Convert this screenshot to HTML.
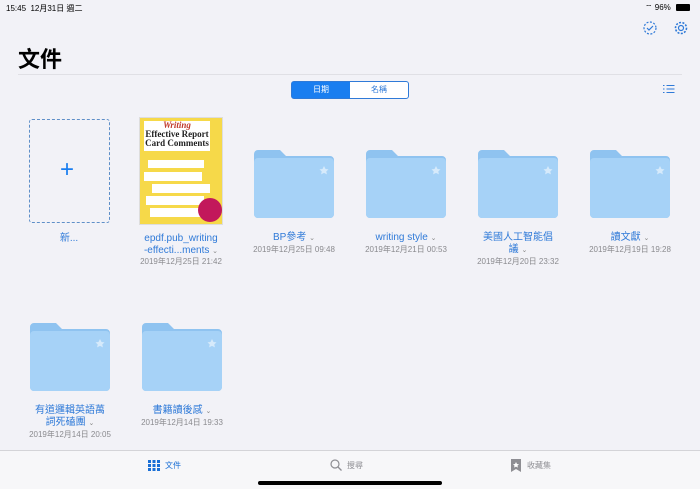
<!DOCTYPE html><html><head><meta charset="utf-8"><style>
*{margin:0;padding:0;box-sizing:border-box}
body{width:700px;height:489px;background:#f2f2f7;font-family:"Liberation Sans","Noto Sans CJK TC",sans-serif;position:relative;overflow:hidden;color:#000}
.a{position:absolute}
.fold{position:absolute;width:80px;height:68px}
.name{position:absolute;width:112px;text-align:center;font-size:10px;color:#2f7ad8;line-height:12px}
.date{position:absolute;width:112px;text-align:center;font-size:8px;color:#8a8a8e}
.tab{position:absolute;top:460px;font-size:8px;color:#8e8e93}
</style></head><body>
<div class="a" style="left:6px;top:3px;font-size:8px">15:45&nbsp; 12月31日 週二</div>
<div class="a" style="left:645px;top:3px;font-size:8px">⌔ 96%</div>
<div class="a" style="left:676px;top:4px;width:14px;height:7px;background:#000;border-radius:1px"></div>
<svg class="a" style="left:642px;top:20px" width="16" height="16"><circle cx="8" cy="8" r="6" fill="none" stroke="#2f7ad8" stroke-width="1.2" stroke-dasharray="2 1.5"/><path d="M5 8l2 2 4-4" stroke="#2f7ad8" fill="none" stroke-width="1.2"/></svg>
<svg class="a" style="left:673px;top:20px" width="16" height="16"><circle cx="8" cy="8" r="5.5" fill="none" stroke="#2f7ad8" stroke-width="1.6" stroke-dasharray="2 1.4"/><circle cx="8" cy="8" r="2.5" fill="none" stroke="#2f7ad8" stroke-width="1.2"/></svg>
<div class="a" style="left:18px;top:42px;font-size:22px;font-weight:bold">文件</div>
<div class="a" style="left:18px;top:74px;width:664px;height:1px;background:#e0e0e5"></div>
<div class="a" style="left:291px;top:81px;width:118px;height:18px;border:1px solid #2f7ad8;border-radius:3px;background:#fff;font-size:8px">
<div class="a" style="left:0;top:0;width:58px;height:16px;background:#1a7ef0;color:#fff;text-align:center;line-height:16px">日期</div>
<div class="a" style="left:58px;top:0;width:58px;height:16px;color:#2f7ad8;text-align:center;line-height:16px">名稱</div></div>
<svg class="a" style="left:663px;top:84px" width="12" height="10"><g stroke="#2f7ad8" stroke-width="1"><path d="M0 1.5h1.5M0 5h1.5M0 8.5h1.5M3.5 1.5h8M3.5 5h8M3.5 8.5h8"/></g></svg>
<div class="a" style="left:29px;top:119px;width:81px;height:104px;border:1px dashed #5f8fc8;border-radius:3px"></div>
<div class="a" style="left:60px;top:156px;font-size:24px;color:#1a7ef0;line-height:28px">+</div>
<div class="name" style="left:13px;top:233px">新...</div>
<div class="a" style="left:139px;top:117px;width:84px;height:108px;background:#f6d949;border:1px solid #ddd">
<div class="a" style="left:4px;top:3px;width:66px;height:30px;background:#fff;font:bold 9px 'Liberation Serif';color:#222;text-align:center;line-height:9px"><span style="color:#c0392b;font-style:italic">Writing</span><br>Effective Report<br>Card Comments</div>
<div class="a" style="left:8px;top:42px;width:56px;height:8px;background:#fff"></div>
<div class="a" style="left:4px;top:54px;width:58px;height:9px;background:#fff"></div>
<div class="a" style="left:12px;top:66px;width:58px;height:9px;background:#fff"></div>
<div class="a" style="left:6px;top:78px;width:58px;height:9px;background:#fff"></div>
<div class="a" style="left:10px;top:90px;width:54px;height:9px;background:#fff"></div>
<div class="a" style="left:58px;top:80px;width:24px;height:24px;border-radius:50%;background:#c2185b"></div></div>
<div class="name" style="left:125px;top:233px">epdf.pub_writing<br>-effecti...ments <span style="font-size:7px;color:#888">⌄</span></div>
<div class="date" style="left:125px;top:256px">2019年12月25日 21:42</div>
<svg width="0" height="0" style="position:absolute"><defs><g id="f"><path d="M4 0h22l6 6h44a4 4 0 0 1 4 4v54a4 4 0 0 1-4 4H4a4 4 0 0 1-4-4V4a4 4 0 0 1 4-4z" fill="#8fc3f0"/><path d="M0 12a4 4 0 0 1 4-4h72a4 4 0 0 1 4 4v52a4 4 0 0 1-4 4H4a4 4 0 0 1-4-4z" fill="#a6d2f7"/><path d="M70 16l1.5 3 3 .4-2.2 2 .6 3-2.9-1.5-2.9 1.5.6-3-2.2-2 3-.4z" fill="#d6eafb"/></g></defs></svg>
<svg class="fold" style="left:254px;top:150px"><use href="#f"/></svg>
<svg class="fold" style="left:366px;top:150px"><use href="#f"/></svg>
<svg class="fold" style="left:478px;top:150px"><use href="#f"/></svg>
<svg class="fold" style="left:590px;top:150px"><use href="#f"/></svg>
<svg class="fold" style="left:30px;top:323px"><use href="#f"/></svg>
<svg class="fold" style="left:142px;top:323px"><use href="#f"/></svg>
<div class="name" style="left:238px;top:232px">BP參考 <span style="font-size:7px;color:#888">⌄</span></div>
<div class="date" style="left:238px;top:244px">2019年12月25日 09:48</div>
<div class="name" style="left:350px;top:232px">writing style <span style="font-size:7px;color:#888">⌄</span></div>
<div class="date" style="left:350px;top:244px">2019年12月21日 00:53</div>
<div class="name" style="left:462px;top:232px">美國人工智能倡<br>議 <span style="font-size:7px;color:#888">⌄</span></div>
<div class="date" style="left:462px;top:256px">2019年12月20日 23:32</div>
<div class="name" style="left:574px;top:232px">讀文獻 <span style="font-size:7px;color:#888">⌄</span></div>
<div class="date" style="left:574px;top:244px">2019年12月19日 19:28</div>
<div class="name" style="left:14px;top:405px">有道邏輯英語萬<br>詞死磕團 <span style="font-size:7px;color:#888">⌄</span></div>
<div class="date" style="left:14px;top:429px">2019年12月14日 20:05</div>
<div class="name" style="left:126px;top:405px">書籍讀後感 <span style="font-size:7px;color:#888">⌄</span></div>
<div class="date" style="left:126px;top:417px">2019年12月14日 19:33</div>
<div class="a" style="left:0;top:450px;width:700px;height:39px;background:#f7f7f9;border-top:1px solid #d4d4d8"></div>
<svg class="a" style="left:148px;top:460px" width="12" height="11"><g fill="#1a6fd6"><rect x="0" y="0" width="3" height="3"/><rect x="4.5" y="0" width="3" height="3"/><rect x="9" y="0" width="3" height="3"/><rect x="0" y="4" width="3" height="3"/><rect x="4.5" y="4" width="3" height="3"/><rect x="9" y="4" width="3" height="3"/><rect x="0" y="8" width="3" height="3"/><rect x="4.5" y="8" width="3" height="3"/><rect x="9" y="8" width="3" height="3"/></g></svg>
<div class="tab" style="left:165px;color:#1a6fd6">文件</div>
<svg class="a" style="left:330px;top:459px" width="12" height="12"><circle cx="5" cy="5" r="4" fill="none" stroke="#8e8e93" stroke-width="1.2"/><path d="M8 8l3.5 3.5" stroke="#8e8e93" stroke-width="1.3"/></svg>
<div class="tab" style="left:347px">搜尋</div>
<svg class="a" style="left:511px;top:459px" width="10" height="13"><path d="M0 0h10v13l-5-3-5 3z" fill="#8e8e93"/><path d="M5 3l1 2 2 .2-1.5 1.4.4 2-1.9-1-1.9 1 .4-2L2 5.2 4 5z" fill="#fff"/></svg>
<div class="tab" style="left:527px">收藏集</div>
<div class="a" style="left:258px;top:481px;width:184px;height:4px;background:#000;border-radius:2px"></div>
</body></html>
